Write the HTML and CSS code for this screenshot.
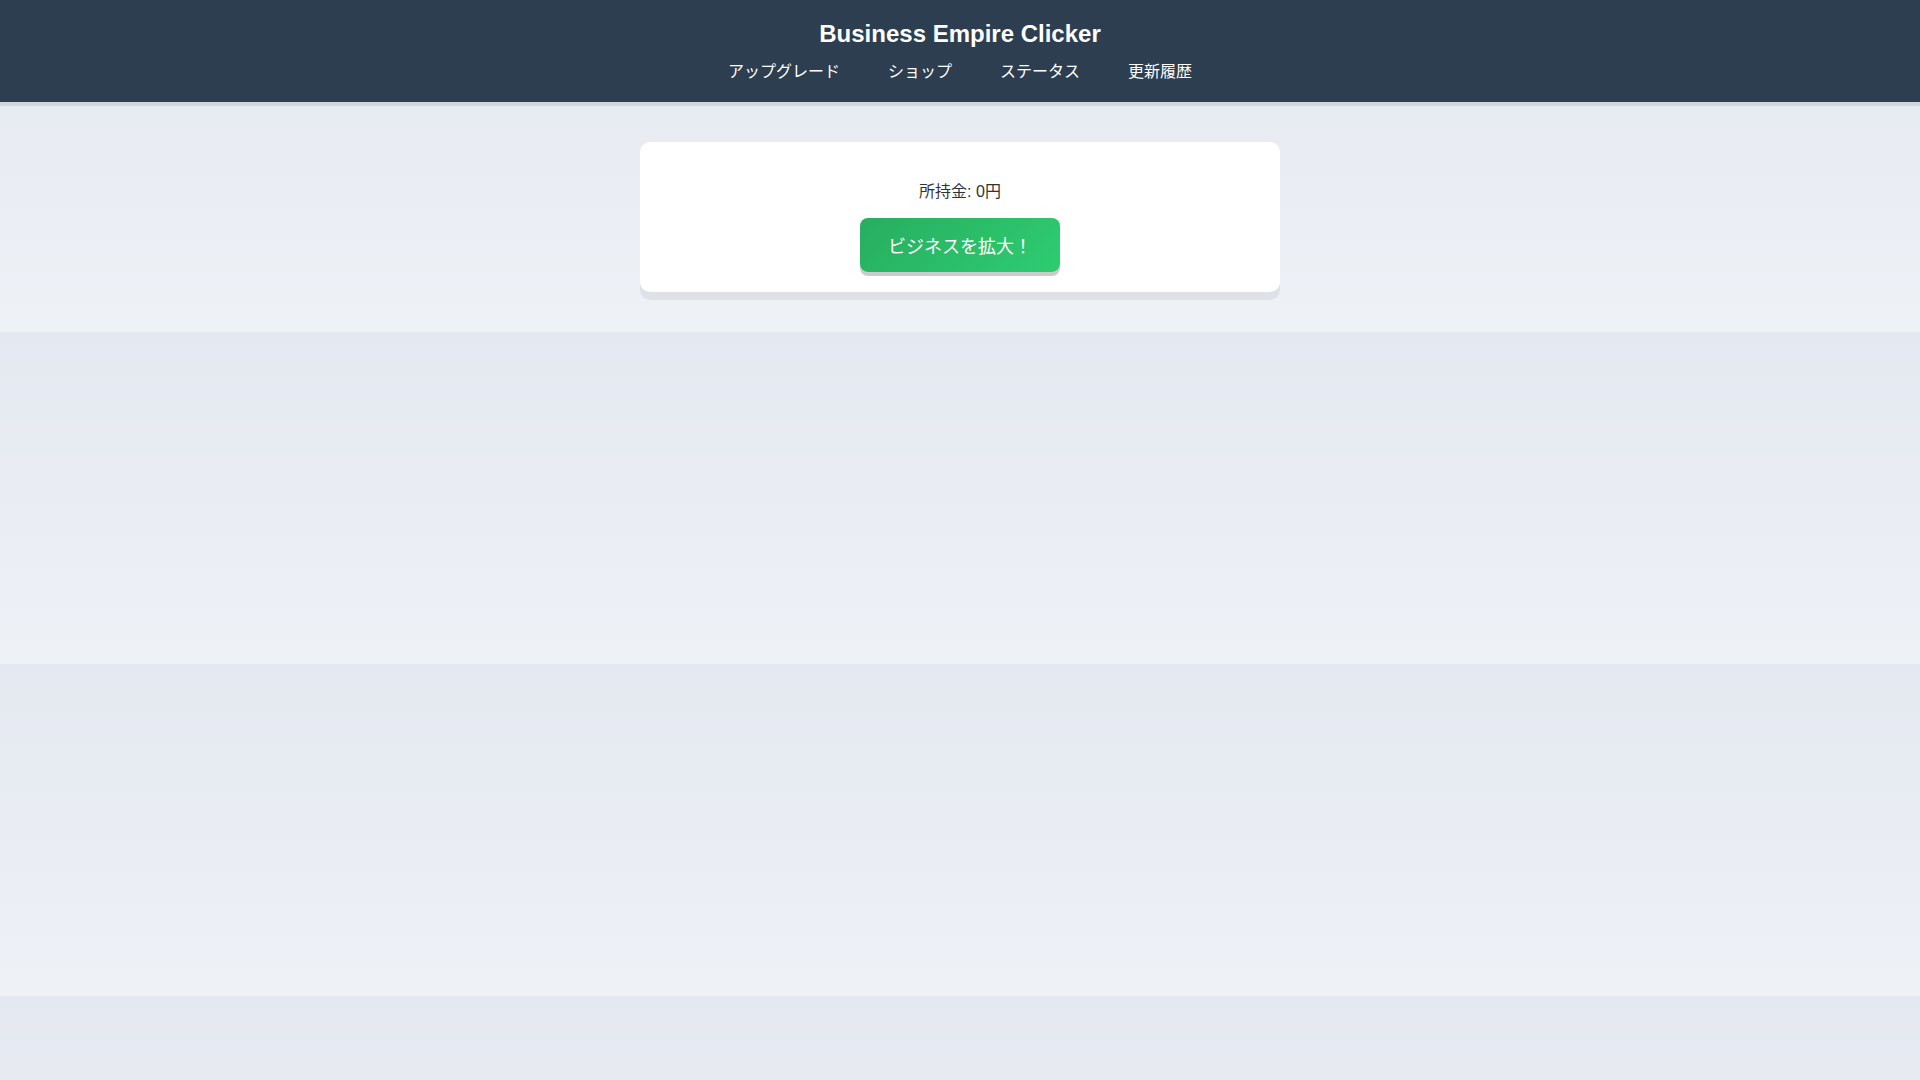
FILE: index.html
```html
<!DOCTYPE html>
<html lang="ja">
<head>
<meta charset="utf-8">
<title>Business Empire Clicker</title>
<link rel="stylesheet" href="styles.css">
</head>
<body>
<header class="site-header">
  <h1 class="title">Business Empire Clicker</h1>
  <nav class="nav">
    <a class="nav-link" href="#">アップグレード</a>
    <a class="nav-link" href="#">ショップ</a>
    <a class="nav-link" href="#">ステータス</a>
    <a class="nav-link" href="#">更新履歴</a>
  </nav>
</header>
<main class="main">
  <section class="card">
    <p class="money">所持金: 0円</p>
    <button class="grow-btn" type="button">ビジネスを拡大！</button>
  </section>
</main>
</body>
</html>
```

FILE: styles.css
```css
body {
  margin: 0;
  font-family: "Liberation Sans", "Noto Sans CJK JP", sans-serif;
  background: linear-gradient(to bottom, #e4e8f0 0%, #eef1f6 100%);
  color: #333;
}

.site-header {
  background: #2c3e50;
  color: #fff;
  text-align: center;
  padding: 20px 0 20px;
  border-bottom: 4px solid #d1d6dd;
}

.title {
  margin: 0 0 10px;
  font-size: 24px;
  line-height: 28px;
  font-weight: bold;
}

.nav {
  display: flex;
  justify-content: center;
  gap: 48px;
  line-height: 24px;
}

.nav-link {
  color: #fff;
  text-decoration: none;
  font-size: 16px;
  font-family: "Noto Sans CJK JP", sans-serif;
}

.main {
  padding: 36px 0 40px;
}

.card {
  width: 640px;
  margin: 0 auto;
  box-sizing: border-box;
  background: #fff;
  border-radius: 10px;
  padding: 20px;
  text-align: center;
  box-shadow: 0 8px 0 rgba(0, 0, 0, 0.06);
}

.money {
  margin: 18px 0 14px;
  font-size: 16px;
  line-height: 24px;
  color: #333;
}

.grow-btn {
  display: block;
  margin: 0 auto;
  width: 200px;
  height: 54px;
  border: none;
  border-radius: 8px;
  background: linear-gradient(135deg, #27ae60, #2ecc71);
  color: #fff;
  font-size: 18px;
  font-family: "Noto Sans CJK JP", sans-serif;
  box-shadow: 0 4px 0 rgba(0, 0, 0, 0.2);
  cursor: pointer;
  padding: 0;
}
```
